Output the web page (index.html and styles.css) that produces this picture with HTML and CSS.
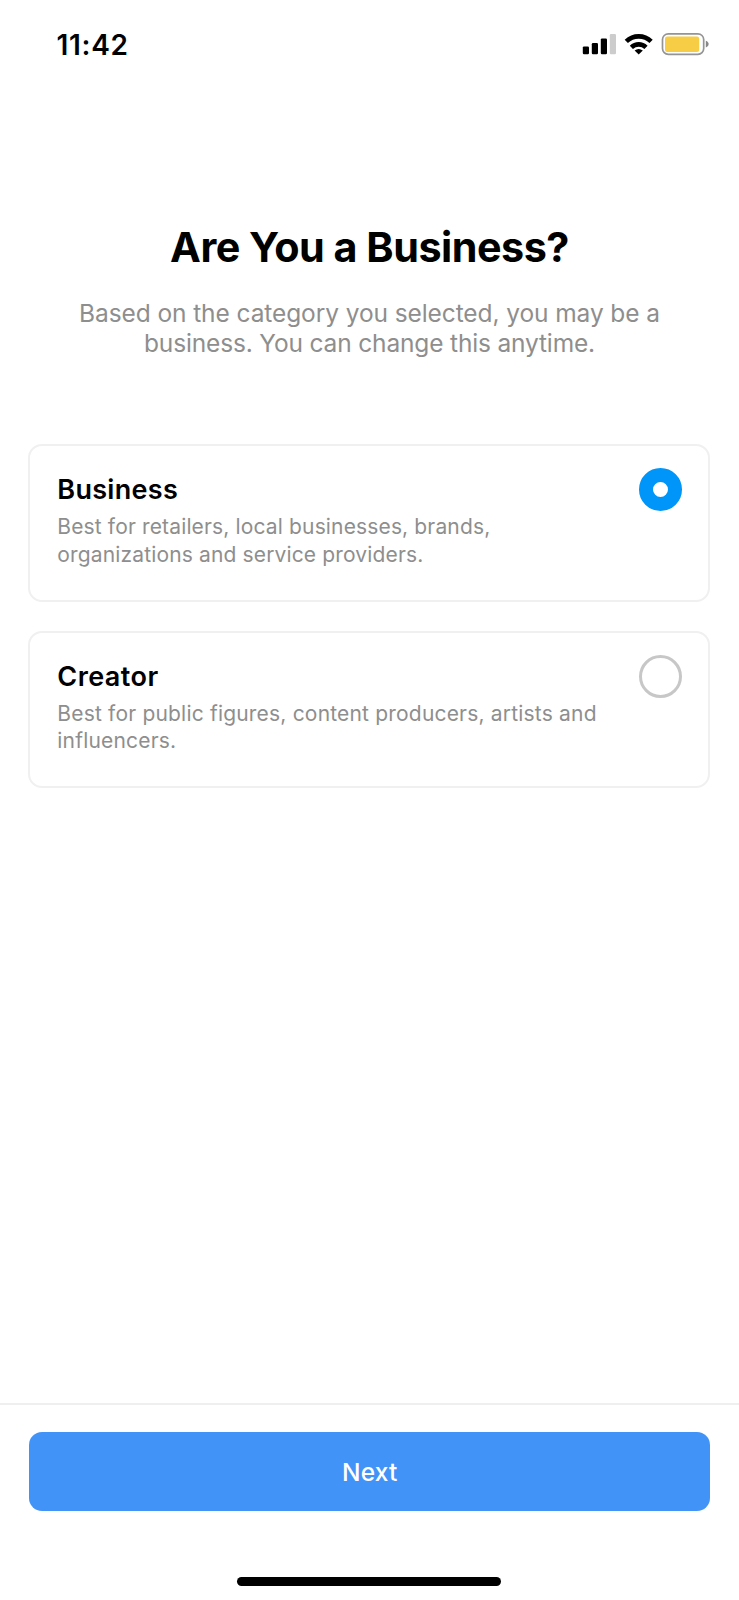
FILE: index.html
```
<!DOCTYPE html>
<html lang="en">
<head>
<meta charset="utf-8">
<title>Are You a Business?</title>
<link rel="stylesheet" href="styles.css">
</head>
<body>
<div class="screen">
  <header class="status">
    <span class="time">11:42</span>
    <svg class="indicators" width="130" height="24" viewBox="580 32 130 24" aria-hidden="true">
      <rect x="582.8" y="46.4" width="6.2" height="7.8" rx="1.2"/>
      <rect x="591.8" y="43" width="6.2" height="11.2" rx="1.2"/>
      <rect x="600.8" y="38.4" width="6.2" height="15.8" rx="1.2"/>
      <rect x="609.8" y="34" width="6.2" height="20.2" rx="1.2" fill="#ccc"/>
      <g fill="none" stroke="#000" stroke-width="4.6">
        <path d="M626.3 41.4a17.8 17.8 0 0 1 24.8 0"/>
        <path d="M631.4 47.3a10.6 10.6 0 0 1 14.6 0"/>
      </g>
      <path d="M634.6 50.6a6.4 6.4 0 0 1 8.2 0l-4.1 4z"/>
      <rect x="662.5" y="33.8" width="41.2" height="20.6" rx="5.8" fill="#fff" stroke="#949494" stroke-width="1.7"/>
      <rect x="665" y="36.6" width="34.2" height="15.4" rx="2.2" fill="#f7cd45"/>
      <path d="M705.8 40.8c3.8 1.3 3.8 5.4 0 6.7z" fill="#888"/>
    </svg>
  </header>
  <main class="content">
    <h1 class="title">Are You a Business?</h1>
    <p class="subtitle">Based on the category you selected, you may be a<br><span class="subtitle-end">business. You can change this anytime.</span></p>
    <div class="options">
      <section class="card">
        <div class="card-text">
          <h2 class="card-title">Business</h2>
          <p class="card-desc">Best for retailers, local businesses, brands,<br>organizations and service providers.</p>
        </div>
        <span class="radio radio-on"></span>
      </section>
      <section class="card">
        <div class="card-text">
          <h2 class="card-title card-title-wide">Creator</h2>
          <p class="card-desc card-desc-wide">Best for public figures, content producers, artists and<br>influencers.</p>
        </div>
        <span class="radio"></span>
      </section>
    </div>
  </main>
  <footer class="footer">
    <button class="next" type="button">Next</button>
    <div class="home-bar"></div>
  </footer>
</div>
</body>
</html>
```
FILE: styles.css
```
* { box-sizing: border-box; }
body { margin: 0; background: #fff; color: #000; font-family: Inter, "Liberation Sans", sans-serif; }
h1, h2, p { margin: 0; }
.screen { width: 739px; height: 1600px; display: flex; flex-direction: column; overflow: hidden; }
.status { display: flex; justify-content: space-between; align-items: flex-start; height: 222px; padding: 24px 29px 0 56.5px; }
.time { padding-top: 1px; font-size: 28px; line-height: 40px; font-weight: 600; letter-spacing: 0.7px; }
.indicators { margin-top: 8px; }
.content { flex: 1; }
.title { font-size: 41.3px; line-height: 50px; font-weight: 700; letter-spacing: -0.5px; text-align: center; }
.subtitle { margin-top: 27.3px; font-size: 24.5px; line-height: 29.5px; letter-spacing: -0.092px; color: #8e8e8e; text-align: center; }
.subtitle-end { letter-spacing: -0.16px; }
.options { display: flex; flex-direction: column; gap: 29px; margin: 85.7px 29px 0 28px; }
.card { display: flex; justify-content: space-between; height: 157.6px; padding: 22px 26px 0 27.3px; border: 2px solid #f0f0f0; border-radius: 14px; }
.card-text { padding-top: 6px; white-space: nowrap; }
.card-title { font-size: 27px; line-height: 32px; font-weight: 600; letter-spacing: 0.3px; }
.card-title-wide { letter-spacing: 0.44px; }
.card-desc { margin-top: 7.2px; font-size: 21px; line-height: 27.6px; letter-spacing: 0.145px; color: #8e8e8e; }
.card-desc-wide { letter-spacing: 0.19px; }
.radio { flex: none; width: 43px; height: 43px; border: 3px solid #c7c7c7; border-radius: 50%; }
.radio-on { border: 14px solid #0095f8; }
.footer { height: 197px; border-top: 2px solid #efefef; padding: 27px 29px 0 28.5px; }
.next { display: block; width: 100%; height: 79px; padding: 0 0 0 1px; border: 0; border-radius: 13px; background: #4293f7; color: #fff; font: 500 24.5px/78px Inter, "Liberation Sans", sans-serif; letter-spacing: 0.17px; }
.home-bar { width: 264px; height: 9px; margin: 66px auto 0; border-radius: 4.5px; background: #000; }
```
